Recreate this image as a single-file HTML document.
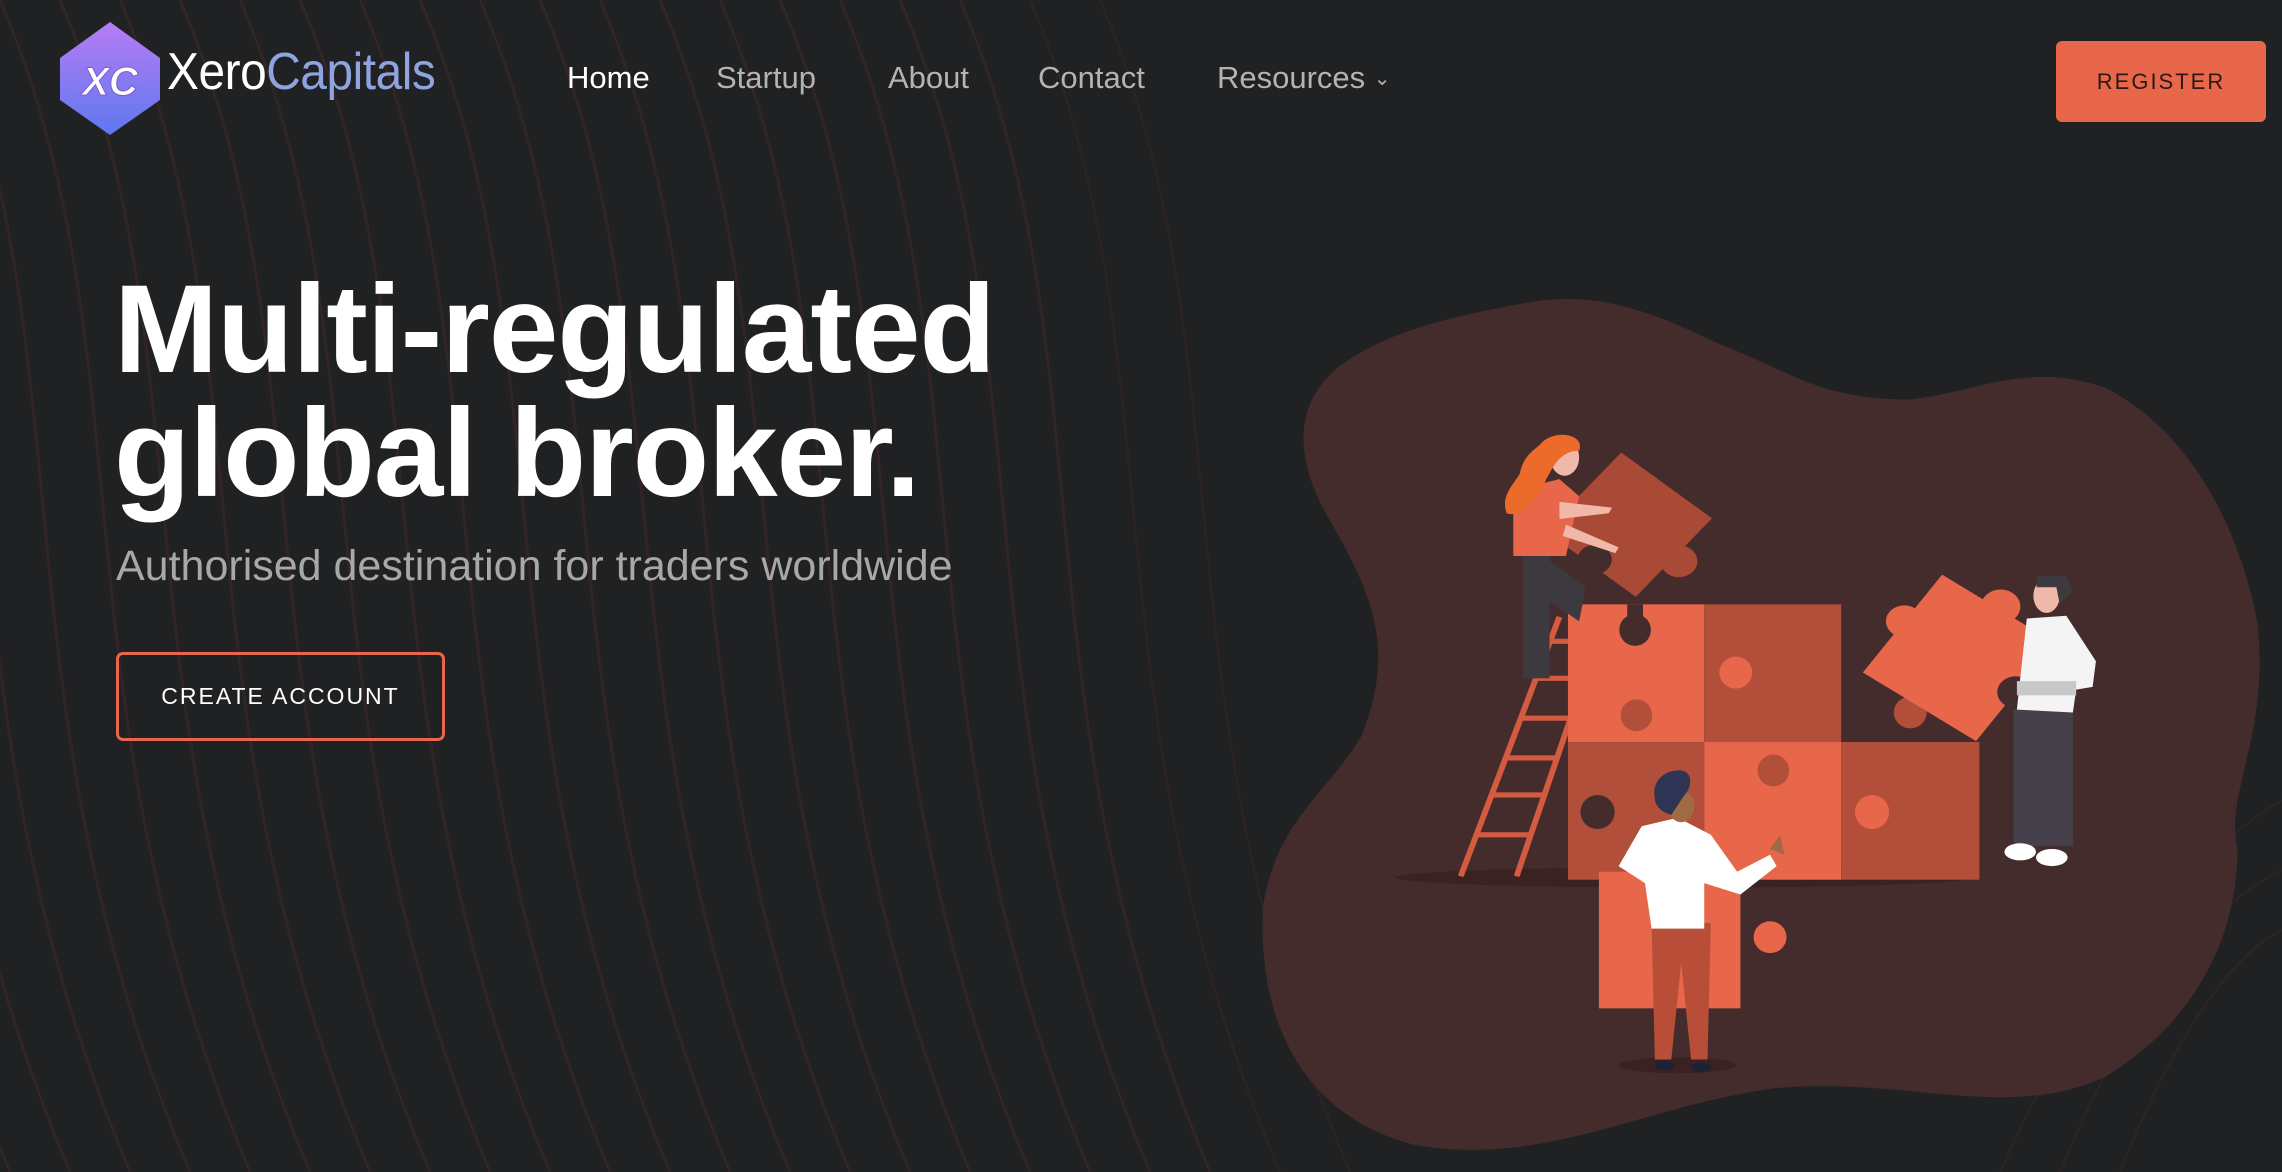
<!DOCTYPE html>
<html><head><meta charset="utf-8"><style>
*{margin:0;padding:0;box-sizing:border-box}
html,body{width:2282px;height:1172px;overflow:hidden;background:#202123;font-family:"Liberation Sans",sans-serif}
.abs{position:absolute}
.nav{position:absolute;top:60px;font-size:31px;color:#b3b3b3;white-space:nowrap}
</style></head><body>
<svg class="abs" style="left:0;top:0" width="2282" height="1172" viewBox="0 0 2282 1172">
<g fill="none" stroke="#3e2826" stroke-width="3" opacity="0.6">
<path d="M-300,0 C-150,350 -250,700 -50,1172"/><path d="M-240,0 C-90,350 -190,700 10,1172"/>
<path d="M-180,0 C-30,350 -130,700 70,1172"/><path d="M-120,0 C30,350 -70,700 130,1172"/>
<path d="M-60,0 C90,350 -10,700 190,1172"/><path d="M0,0 C150,350 50,700 250,1172"/>
<path d="M60,0 C210,350 110,700 310,1172"/><path d="M120,0 C270,350 170,700 370,1172"/>
<path d="M180,0 C330,350 230,700 430,1172"/><path d="M240,0 C390,350 290,700 490,1172"/>
<path d="M300,0 C450,350 350,700 550,1172"/><path d="M360,0 C510,350 410,700 610,1172"/>
<path d="M420,0 C570,350 470,700 670,1172"/><path d="M480,0 C630,350 530,700 730,1172"/>
<path d="M540,0 C690,350 590,700 790,1172"/><path d="M600,0 C750,350 650,700 850,1172"/>
<path d="M660,0 C810,350 710,700 910,1172"/><path d="M720,0 C870,350 770,700 970,1172"/>
<path d="M780,0 C930,350 830,700 1030,1172"/><path d="M840,0 C990,350 890,700 1090,1172"/>
<path d="M900,0 C1050,350 950,700 1150,1172"/><path d="M960,0 C1110,350 1010,700 1210,1172"/>
</g>
<g fill="none" stroke="#3a2624" stroke-width="2" opacity="0.6">
<path d="M1030,0 C1180,350 1080,700 1280,1172"/><path d="M1100,0 C1250,350 1150,700 1350,1172"/>
<path d="M2000,1172 C2100,950 2200,850 2282,800"/><path d="M2060,1172 C2140,980 2220,900 2282,870"/>
<path d="M2120,1172 C2180,1020 2240,950 2282,930"/>
</g>
<g transform="translate(1250,280) scale(0.6583,0.569)">
<path fill="#452c2c" d="M420,40 C560,10 660,90 750,130 C830,170 880,210 1000,210 C1100,200 1180,140 1300,190 C1420,260 1500,420 1530,600 C1550,800 1480,900 1500,1000 C1500,1150 1440,1300 1300,1400 C1150,1480 1000,1400 800,1420 C600,1450 450,1560 250,1520 C80,1470 10,1300 20,1100 C40,950 120,900 170,800 C220,650 190,560 120,420 C60,300 70,200 150,140 C230,80 330,60 420,40Z"/>
<ellipse cx="660" cy="1050" rx="440" ry="18" fill="#3a2221"/>
<ellipse cx="650" cy="1380" rx="90" ry="14" fill="#3a2221"/>
<g stroke="#d45a40" stroke-width="9" fill="none"><path d="M320,1048 L470,592"/><path d="M405,1048 L490,760"/>
<path d="M345,975 L430,975"/><path d="M370,905 L450,905"/><path d="M390,840 L470,840"/><path d="M410,770 L485,770"/><path d="M430,700 L485,700"/><path d="M450,635 L485,635"/></g>
<rect x="483" y="570" width="207" height="242" fill="#e8664a"/>
<rect x="690" y="570" width="208" height="242" fill="#b24f3a"/>
<rect x="483" y="812" width="207" height="242" fill="#b24f3a"/>
<rect x="690" y="812" width="208" height="242" fill="#e8664a"/>
<rect x="898" y="812" width="210" height="242" fill="#b24f3a"/>
<ellipse cx="585" cy="615" rx="24" ry="28" fill="#452c2c"/><rect x="573" y="570" width="24" height="30" fill="#452c2c"/>
<ellipse cx="738" cy="690" rx="25" ry="28" fill="#e8664a"/>
<ellipse cx="587" cy="765" rx="24" ry="28" fill="#b24f3a"/>
<ellipse cx="795" cy="862" rx="24" ry="28" fill="#b24f3a"/>
<ellipse cx="945" cy="935" rx="26" ry="30" fill="#e8664a"/>
<ellipse cx="528" cy="935" rx="26" ry="30" fill="#452c2c"/>
<ellipse cx="1003" cy="760" rx="25" ry="28" fill="#b24f3a"/>
<!-- woman -->
<rect x="415" y="480" width="40" height="220" fill="#3d3a3f"/><path d="M440,480 L510,540 L500,600 L450,560Z" fill="#3d3a3f"/>
<g transform="rotate(40 575 430)"><rect x="485" y="340" width="180" height="180" fill="#a84a36"/><circle cx="675" cy="430" r="28" fill="#a84a36"/><circle cx="575" cy="510" r="26" fill="#452c2c"/></g>
<path d="M400,370 L470,350 L500,380 L480,485 L400,485Z" fill="#e8664a"/>
<path d="M470,390 L550,400 L545,410 L470,420Z" fill="#f0b8a8"/>
<path d="M480,430 L560,470 L555,480 L475,450Z" fill="#f0b8a8"/>
<ellipse cx="478" cy="312" rx="22" ry="32" fill="#f0b8a8"/>
<path d="M440,290 C460,260 510,270 500,300 C470,300 460,330 450,350 C440,380 410,420 390,410 C380,380 400,360 410,340 C415,310 430,300 440,290Z" fill="#ec6a2a"/>
<!-- right man -->
<g transform="rotate(35 1080 660)"><rect x="975" y="560" width="210" height="210" fill="#e8664a"/><circle cx="1080" cy="555" r="30" fill="#e8664a"/><circle cx="975" cy="660" r="28" fill="#e8664a"/><circle cx="1185" cy="665" r="28" fill="#452c2c"/></g>
<rect x="1160" y="755" width="90" height="240" fill="#46404a"/>
<path d="M1180,595 L1240,590 L1285,670 L1280,715 L1255,720 L1250,760 L1165,755 L1170,700Z" fill="#f4f4f4"/>
<rect x="1165" y="705" width="90" height="25" fill="#c8c8c8"/>
<ellipse cx="1170" cy="1005" rx="24" ry="15" fill="#fff"/><ellipse cx="1218" cy="1015" rx="24" ry="15" fill="#fff"/>
<ellipse cx="1210" cy="555" rx="20" ry="30" fill="#f0b8a8"/>
<path d="M1195,520 L1240,520 L1250,545 L1230,570 L1225,540 L1195,540Z" fill="#3d3a3f"/>
<!-- front man -->
<rect x="530" y="1040" width="215" height="240" fill="#e8664a"/><ellipse cx="790" cy="1155" rx="25" ry="28" fill="#e8664a"/>
<path d="M610,1130 L700,1130 L695,1370 L670,1370 L655,1200 L640,1370 L615,1370Z" fill="#b84e38"/>
<path d="M595,960 L650,945 L700,975 L740,1040 L790,1010 L800,1030 L745,1080 L690,1060 L690,1140 L610,1140 L600,1060 L560,1030 Z" fill="#fff"/>
<path d="M790,1000 L805,975 L812,1010Z" fill="#a06a45"/>
<ellipse cx="655" cy="925" rx="20" ry="28" fill="#a06a45"/>
<path d="M615,910 C610,880 630,860 655,862 C675,865 670,895 660,905 L640,940 C625,935 615,925 615,910Z" fill="#2d3454"/>
<ellipse cx="630" cy="1380" rx="15" ry="9" fill="#1e2235"/><ellipse cx="685" cy="1383" rx="15" ry="9" fill="#1e2235"/>
</g>
<!-- logo -->
<defs><linearGradient id="lg" x1="0" y1="0" x2="0" y2="1"><stop offset="0" stop-color="#b77cf4"/><stop offset="1" stop-color="#5d78f0"/></linearGradient></defs>
<path d="M110,22 L160,58 L160,100 L110,135 L60,100 L60,58Z" fill="url(#lg)"/>
<text x="110" y="95" font-family="Liberation Sans" font-weight="bold" font-style="italic" font-size="40" fill="#fff" text-anchor="middle" stroke="#7a5fd0" stroke-width="1">XC</text>
</svg>
<div class="abs" style="left:167px;top:42px;font-size:52px;color:#fff;transform:scaleX(0.92);transform-origin:0 0;white-space:nowrap;letter-spacing:-0.5px">Xero<span style="color:#8ea3e0">Capitals</span></div>
<div class="nav" style="left:567px;color:#fff">Home</div>
<div class="nav" style="left:716px">Startup</div>
<div class="nav" style="left:888px">About</div>
<div class="nav" style="left:1038px">Contact</div>
<div class="nav" style="left:1217px">Resources <span style="font-size:20px;position:relative;top:-3px">&#8964;</span></div>
<div class="abs" style="left:2056px;top:41px;width:210px;height:81px;background:#e8664a;border-radius:6px;color:#2a1a17;font-size:22px;letter-spacing:2px;display:flex;align-items:center;justify-content:center">REGISTER</div>
<div class="abs" style="left:114px;top:268px;font-size:125px;font-weight:bold;color:#fff;line-height:124px;letter-spacing:-1px;white-space:nowrap">Multi-regulated<br>global broker.</div>
<div class="abs" style="left:116px;top:542px;font-size:43px;color:#a8a8a8;white-space:nowrap">Authorised destination for traders worldwide</div>
<div class="abs" style="left:116px;top:652px;width:329px;height:89px;border:3px solid #e8664a;border-radius:7px;color:#fff;font-size:23px;letter-spacing:2px;display:flex;align-items:center;justify-content:center">CREATE ACCOUNT</div>
</body></html>
